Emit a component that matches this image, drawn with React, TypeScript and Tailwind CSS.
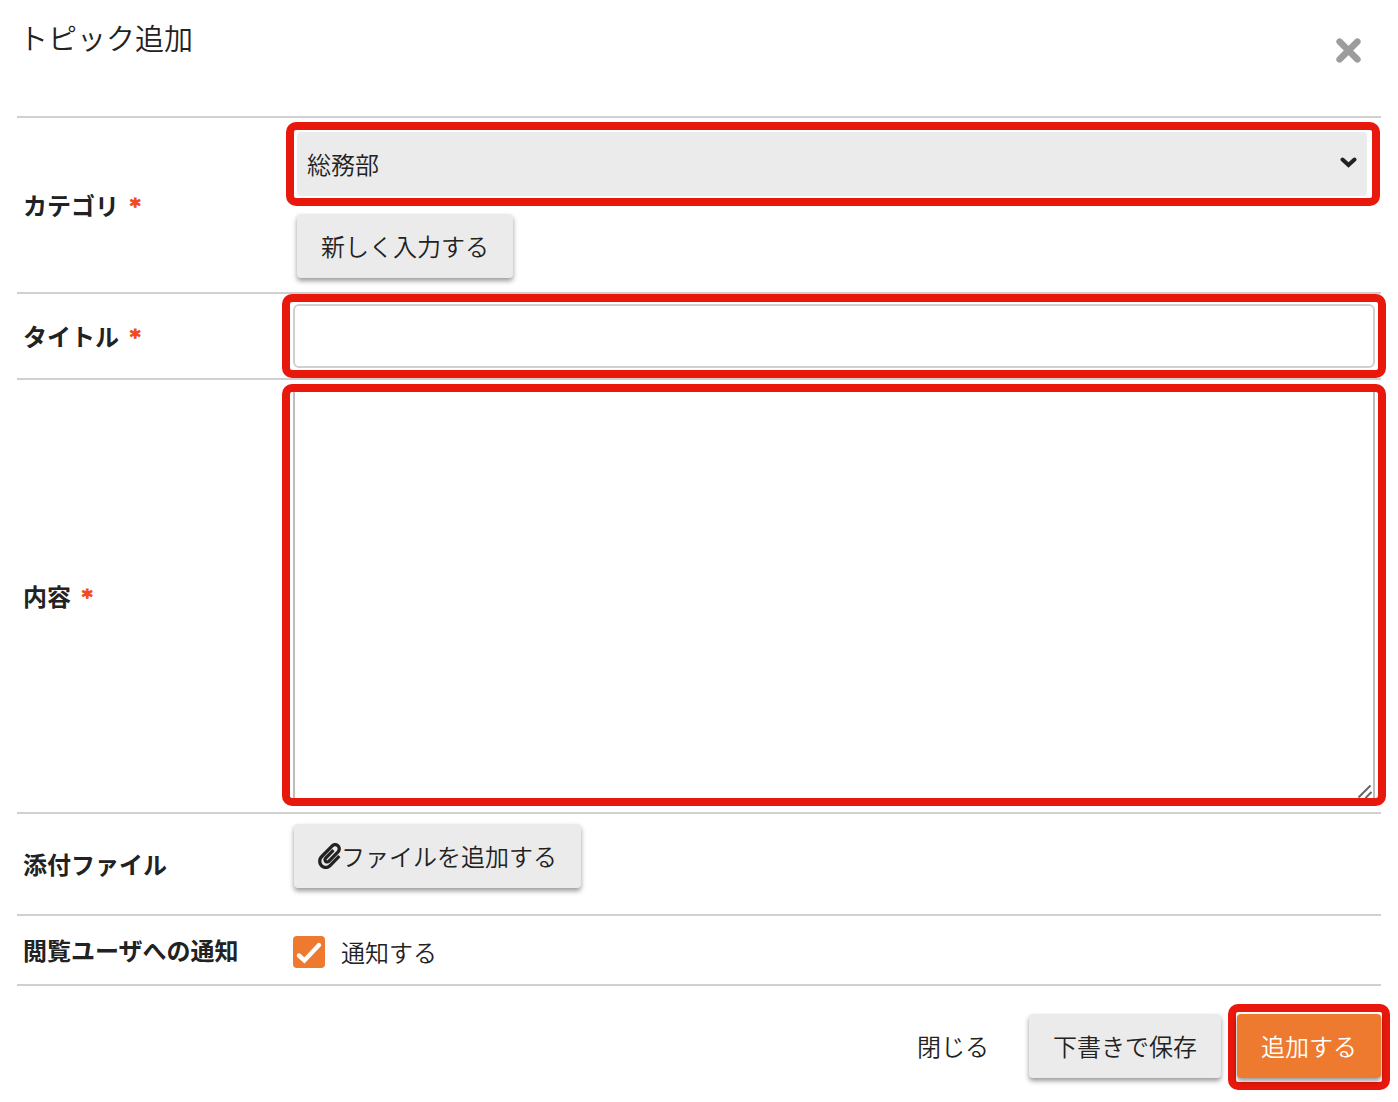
import { useState } from "react";
import type { ReactNode } from "react";
import clsx from "clsx";
import { FaPaperclip } from "react-icons/fa";

const CATEGORIES = ["総務部"];

// ── 強調枠 ──
function Highlight({ className, children }: { className?: string; children: ReactNode }) {
  return (
    <div className={clsx("relative rounded-[10px] border-8 border-[#e8180c]", className)}>
      {children}
    </div>
  );
}

// ── フォームの1行 ──
interface RowProps {
  label: string;
  htmlFor: string;
  required?: boolean;
  className?: string;
  children: ReactNode;
}

function Row({ label, htmlFor, required, className, children }: RowProps) {
  return (
    <div className="flex items-center border-b-2 border-[#d0d0d0]">
      <label htmlFor={htmlFor} className="flex w-[265px] shrink-0 gap-[11px] pl-[6px] font-bold">
        {label}
        {required && (
          <span className="font-['DejaVu_Sans',sans-serif] text-[20px] text-[#f04a24] [-webkit-text-stroke:1px]">
            *
          </span>
        )}
      </label>
      <div className={clsx("-mr-[5px] min-w-0 flex-1", className)}>{children}</div>
    </div>
  );
}

// ── ボタン ──
interface ButtonProps {
  id?: string;
  primary?: boolean;
  submit?: boolean;
  className?: string;
  children: ReactNode;
}

function Button({ id, primary, submit, className, children }: ButtonProps) {
  return (
    <button
      id={id}
      type={submit ? "submit" : "button"}
      className={clsx(
        "flex h-16 items-center rounded-[4px] px-6 shadow-[0_3px_5px_rgba(0,0,0,0.4)]",
        primary ? "bg-[#ee7a30] text-white" : "bg-[#ebebeb]",
        className,
      )}
    >
      {children}
    </button>
  );
}

export default function App() {
  const [category, setCategory] = useState(CATEGORIES[0]);
  const [title, setTitle] = useState("");
  const [body, setBody] = useState("");
  const [notify, setNotify] = useState(true);

  return (
    <form
      onSubmit={(e) => e.preventDefault()}
      className="bg-white px-[17px] pb-3 font-['Noto_Sans_CJK_JP',sans-serif] text-[24px] leading-9 font-[350] text-[#222]"
    >
      {/* ヘッダー */}
      <header className="flex h-[118px] items-start justify-between border-b-2 border-[#d0d0d0] pt-[17px] pr-5 pl-[2px]">
        <h1 className="text-[29px] leading-10">トピック追加</h1>
        <button type="button" aria-label="閉じる" className="mt-[21px] text-[#9c9c9c]">
          <svg width="25" height="25" viewBox="0 0 25 25" fill="none" stroke="currentColor" strokeWidth="6.5" strokeLinecap="round">
            <path d="M3.6 3.6 21.4 21.4M21.4 3.6 3.6 21.4" />
          </svg>
        </button>
      </header>

      <Row label="カテゴリ" htmlFor="category" required className="pt-1 pb-[14px]">
        <Highlight className="mr-[6px] ml-1 py-[2px] pr-[5px] pl-[3px]">
          <select
            id="category"
            value={category}
            onChange={(e) => setCategory(e.target.value)}
            className="block h-16 w-full appearance-none rounded-[4px] bg-[#ebebeb] px-[10px]"
          >
            {CATEGORIES.map((c) => (
              <option key={c}>{c}</option>
            ))}
          </select>
          <svg
            className="pointer-events-none absolute top-[27px] right-[15px]"
            width="17"
            height="11"
            viewBox="0 0 17 11"
            fill="none"
            stroke="currentColor"
            strokeWidth="4"
            strokeLinecap="round"
          >
            <path d="M2.5 2.5 8.5 8 14.5 2.5" />
          </svg>
        </Highlight>
        <Button className="mt-2 ml-[15px]">新しく入力する</Button>
      </Row>

      <Row label="タイトル" htmlFor="title" required>
        <Highlight className="px-[3px] py-[2px]">
          <input
            id="title"
            type="text"
            value={title}
            onChange={(e) => setTitle(e.target.value)}
            className="block h-16 w-full rounded-[6px] border-2 border-[#d0d0d0] px-[10px]"
          />
        </Highlight>
      </Row>

      <Row label="内容" htmlFor="body" required className="pt-1 pb-[6px]">
        <Highlight className="px-[3px]">
          <textarea
            id="body"
            value={body}
            onChange={(e) => setBody(e.target.value)}
            className="block h-[406px] w-full resize-none border-x-2 border-[#bdbdbd] px-[10px] py-2"
          />
          <svg
            className="pointer-events-none absolute right-[6px] bottom-0"
            width="14"
            height="13"
            viewBox="0 0 14 13"
            stroke="#666"
            strokeWidth="2"
          >
            <path d="M0.5 12.5 12.5 0.5M7.5 13 13.5 7" />
          </svg>
        </Highlight>
      </Row>

      <Row label="添付ファイル" htmlFor="attach" className="pt-[10px] pb-[26px]">
        <Button id="attach" className="ml-3">
          <FaPaperclip className="h-[26px] w-[23px]" />
          ファイルを追加する
        </Button>
      </Row>

      <Row label="閲覧ユーザへの通知" htmlFor="notify" className="flex pt-5 pb-4">
        <label className="ml-[11px] flex h-8 items-center gap-4">
          <span className="relative flex">
            <input
              id="notify"
              type="checkbox"
              checked={notify}
              onChange={(e) => setNotify(e.target.checked)}
              className="size-8 appearance-none rounded-[4px] border-2 border-[#d0d0d0] checked:border-[#ee7a30] checked:bg-[#ee7a30]"
            />
            {notify && (
              <svg
                className="pointer-events-none absolute inset-0"
                width="32"
                height="32"
                viewBox="0 0 32 32"
                fill="none"
                stroke="#fff"
                strokeWidth="4.4"
                strokeLinecap="round"
              >
                <path d="M6 19.5 11.4 24.4 26 9" />
              </svg>
            )}
          </span>
          通知する
        </label>
      </Row>

      {/* フッター */}
      <footer className="-mr-[9px] flex items-start justify-end pt-[18px]">
        <button type="button" className="mt-[10px] mr-4 h-16 px-6">
          閉じる
        </button>
        <Button className="mt-[10px] mr-[7px]">下書きで保存</Button>
        <Highlight className="px-px pt-[2px] pb-1">
          <Button primary submit>
            追加する
          </Button>
        </Highlight>
      </footer>
    </form>
  );
}
